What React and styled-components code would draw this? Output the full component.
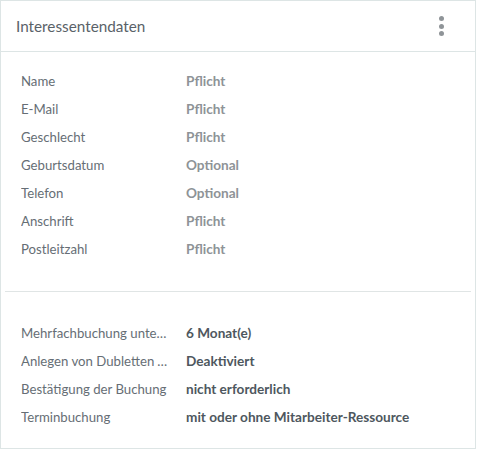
import React from "react";
import styled, { createGlobalStyle } from "styled-components";

const Global = createGlobalStyle`
  html, body { margin: 0; padding: 0; background: #ffffff; }
  body { font-family: "Lato", "Open Sans", sans-serif; }
  * { box-sizing: border-box; }
`;

const Card = styled.div`
  width: 476px;
  height: 449px;
  border: 1px solid #dde5e5;
  background: #fff;
  display: flex;
  flex-direction: column;
`;

const Header = styled.div`
  height: 51px;
  border-bottom: 1px solid #dde5e5;
  display: flex;
  align-items: center;
  justify-content: space-between;
  padding: 0 31px 0 15px;
`;

const Title = styled.h2`
  margin: 0;
  font-size: 15.3px;
  font-weight: 400;
  color: #5a6268;
`;

const MenuButton = styled.button`
  border: none;
  background: none;
  padding: 0;
  width: 6px;
  height: 20px;
  display: flex;
  flex-direction: column;
  align-items: center;
  justify-content: space-between;
  cursor: pointer;
`;

const Dot = styled.span`
  width: 5px;
  height: 5px;
  border-radius: 50%;
  background: #8f9498;
`;

const Section = styled.div`
  padding: ${(p) => p.$pad};
  display: flex;
  flex-direction: column;
`;

const Divider = styled.hr`
  margin: 0 4px;
  border: none;
  border-top: 1px solid #e0e5e5;
`;

const Row = styled.div`
  height: 28px;
  display: grid;
  grid-template-columns: 150px 1fr;
  gap: 15px;
  align-items: center;
`;

const Label = styled.span`
  font-size: 13.2px;
  color: #666e75;
  white-space: nowrap;
  overflow: hidden;
  text-overflow: ellipsis;
`;

const Value = styled.span`
  font-size: 13.6px;
  font-weight: 700;
  color: ${(p) => (p.$strong ? "#4e575e" : "#8e9397")};
  white-space: nowrap;
`;

const fields = [
  ["Name", "Pflicht"],
  ["E-Mail", "Pflicht"],
  ["Geschlecht", "Pflicht"],
  ["Geburtsdatum", "Optional"],
  ["Telefon", "Optional"],
  ["Anschrift", "Pflicht"],
  ["Postleitzahl", "Pflicht"],
];

const settings = [
  ["Mehrfachbuchung unterbinden", "6 Monat(e)"],
  ["Anlegen von Dubletten verhindern", "Deaktiviert"],
  ["Bestätigung der Buchung", "nicht erforderlich"],
  ["Terminbuchung", "mit oder ohne Mitarbeiter-Ressource"],
];

export default function App() {
  return (
    <>
      <Global />
      <Card>
        <Header>
          <Title>Interessentendaten</Title>
          <MenuButton aria-label="Menü">
            <Dot />
            <Dot />
            <Dot />
          </MenuButton>
        </Header>
        <Section $pad="15px 20px 28px">
          {fields.map(([l, v]) => (
            <Row key={l}>
              <Label>{l}</Label>
              <Value>{v}</Value>
            </Row>
          ))}
        </Section>
        <Divider />
        <Section $pad="27px 20px 0">
          {settings.map(([l, v]) => (
            <Row key={l}>
              <Label>{l}</Label>
              <Value $strong>{v}</Value>
            </Row>
          ))}
        </Section>
      </Card>
    </>
  );
}
